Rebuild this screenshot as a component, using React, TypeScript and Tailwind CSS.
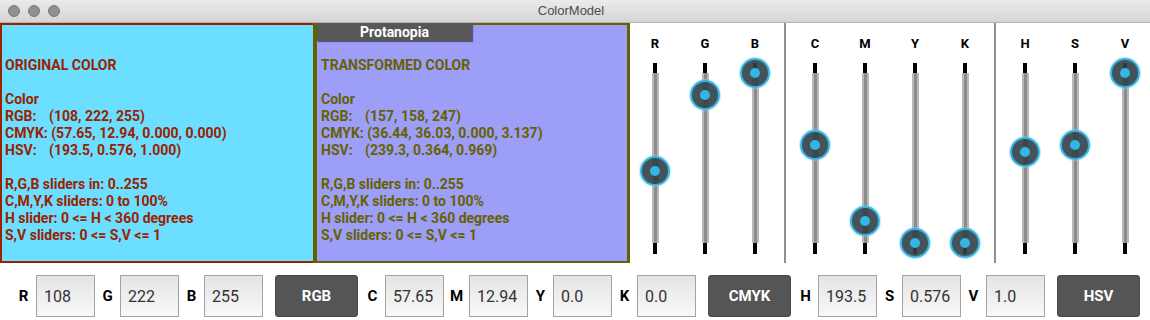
import React from "react";

type Slide = { label: string; value: number };

const rgb: Slide[] = [
  { label: "R", value: 108 / 255 },
  { label: "G", value: 222 / 255 },
  { label: "B", value: 1 },
];
const cmyk: Slide[] = [
  { label: "C", value: 0.5765 },
  { label: "M", value: 0.1294 },
  { label: "Y", value: 0 },
  { label: "K", value: 0 },
];
const hsv: Slide[] = [
  { label: "H", value: 193.5 / 360 },
  { label: "S", value: 0.576 },
  { label: "V", value: 1 },
];

function VSlider({ label, value }: Slide) {
  const top = 10 + (1 - value) * 170 - 15;
  return (
    <div className="w-[50px] flex flex-col items-center pt-[13px]">
      <div className="h-[16px] leading-[16px] text-[13px] font-bold text-black">{label}</div>
      <div className="relative mt-[11px] w-[30px] flex flex-col items-center">
        <div className="h-[10px] w-[4px] bg-black" />
        <div className="h-[170px] w-[7px] bg-[#b8b8b8] flex justify-center">
          <div className="h-full w-[3px] bg-[#8c8c8c]" />
        </div>
        <div className="h-[11px] w-[4px] bg-black" />
        <div
          className="absolute left-0 w-[30px] h-[30px] rounded-full border-2 border-[#33b5e5] bg-[#2f4047]/90 flex items-center justify-center shadow-[0_0_1px_1px_rgba(140,210,240,0.5)]"
          style={{ top }}
        >
          <div className="w-[10px] h-[10px] rounded-full bg-[#33b5e5]" />
        </div>
      </div>
    </div>
  );
}

function Separator() {
  return <div className="mx-[4px] w-[2px] h-full bg-[#8f8f8f]" />;
}

function Info({ title, color }: { title: string; color: string[] }) {
  return (
    <div className="whitespace-pre">
      <div>{title}</div>
      <div>&nbsp;</div>
      <div>Color</div>
      <div>
        <span className="inline-block w-[44px]">RGB:</span>
        {color[0]}
      </div>
      <div>CMYK: {color[1]}</div>
      <div>
        <span className="inline-block w-[44px]">HSV:</span>
        {color[2]}
      </div>
      <div>&nbsp;</div>
      <div>R,G,B sliders in: 0..255</div>
      <div>C,M,Y,K sliders: 0 to 100%</div>
      <div>H slider: 0 &lt;= H &lt; 360 degrees</div>
      <div>S,V sliders: 0 &lt;= S,V &lt;= 1</div>
    </div>
  );
}

function Field({ label, value }: { label: string; value: string }) {
  return (
    <div className="w-[84px] h-[42px] flex items-center">
      <span className="w-[25px] text-center text-[15px] font-bold text-black">{label}</span>
      <input
        defaultValue={value}
        className="w-[59px] h-[42px] border border-[#a3a3a3] bg-linear-to-b from-[#e4e4e4] to-[#f8f8f8] pl-[7px] text-[16px] text-[#333] outline-none"
      />
    </div>
  );
}

function ModeButton({ children }: { children: React.ReactNode }) {
  return (
    <button className="ml-[12px] mr-[2px] w-[83px] h-[42px] rounded-[3px] bg-[#555555] border border-[#4a4a4a] text-white font-bold text-[15px]">
      {children}
    </button>
  );
}

export default function App() {
  return (
    <div className="w-[1150px] h-[320px] bg-white overflow-hidden font-['Roboto',sans-serif]">
      <div className="h-[23px] border-b border-[#b3b3b3] bg-linear-to-b from-[#ebebeb] to-[#d5d5d5] flex items-center relative">
        <div className="flex gap-[8px] pl-[8px]">
          <div className="w-[12px] h-[12px] rounded-full bg-[#8f8e93] border border-[#7a797e]" />
          <div className="w-[12px] h-[12px] rounded-full bg-[#8f8e93] border border-[#7a797e]" />
          <div className="w-[12px] h-[12px] rounded-full bg-[#8f8e93] border border-[#7a797e]" />
        </div>
        <div className="flex-1 text-center pr-[68px] text-[13px] text-[#4d4d4d] font-['Liberation_Sans',sans-serif]">
          ColorModel
        </div>
      </div>

      <div className="h-[240px] flex">
        <div className="w-[313px] h-full bg-[#6cdeff] border-l-2 border-t-2 border-b-2 border-[#992200] pl-[3px] pt-[32px] text-[14px] leading-[17px] font-bold text-[#992200]">
          <Info
            title="ORIGINAL COLOR"
            color={["(108, 222, 255)", "(57.65, 12.94, 0.000, 0.000)", "(193.5, 0.576, 1.000)"]}
          />
        </div>

        <div className="w-[317px] h-full bg-[#9d9ef7] border-l-4 border-r-3 border-b-2 border-[#666100] flex flex-col">
          <div className="h-[18px] flex">
            <div className="w-[155px] h-[18px] bg-[#575757] text-white font-bold text-[14px] leading-[18px] text-center shadow-[1px_1px_1px_rgba(0,0,0,0.45)]">
              Protanopia
            </div>
            <div className="flex-1 border-t-2 border-[#666100]" />
          </div>
          <div className="pl-[4px] pt-[16px] text-[14px] leading-[17px] font-bold text-[#666100]">
            <Info
              title="TRANSFORMED COLOR"
              color={["(157, 158, 247)", "(36.44, 36.03, 0.000, 3.137)", "(239.3, 0.364, 0.969)"]}
            />
          </div>
        </div>

        <div className="flex-1 h-full flex">
          {rgb.map((s) => (
            <VSlider key={s.label} {...s} />
          ))}
          <Separator />
          {cmyk.map((s) => (
            <VSlider key={s.label} {...s} />
          ))}
          <Separator />
          {hsv.map((s) => (
            <VSlider key={s.label} {...s} />
          ))}
        </div>
      </div>

      <div className="flex items-start pt-[12px] pl-[11px]">
        <Field label="R" value="108" />
        <Field label="G" value="222" />
        <Field label="B" value="255" />
        <ModeButton>RGB</ModeButton>
        <Field label="C" value="57.65" />
        <Field label="M" value="12.94" />
        <Field label="Y" value="0.0" />
        <Field label="K" value="0.0" />
        <ModeButton>CMYK</ModeButton>
        <Field label="H" value="193.5" />
        <Field label="S" value="0.576" />
        <Field label="V" value="1.0" />
        <ModeButton>HSV</ModeButton>
      </div>
    </div>
  );
}
